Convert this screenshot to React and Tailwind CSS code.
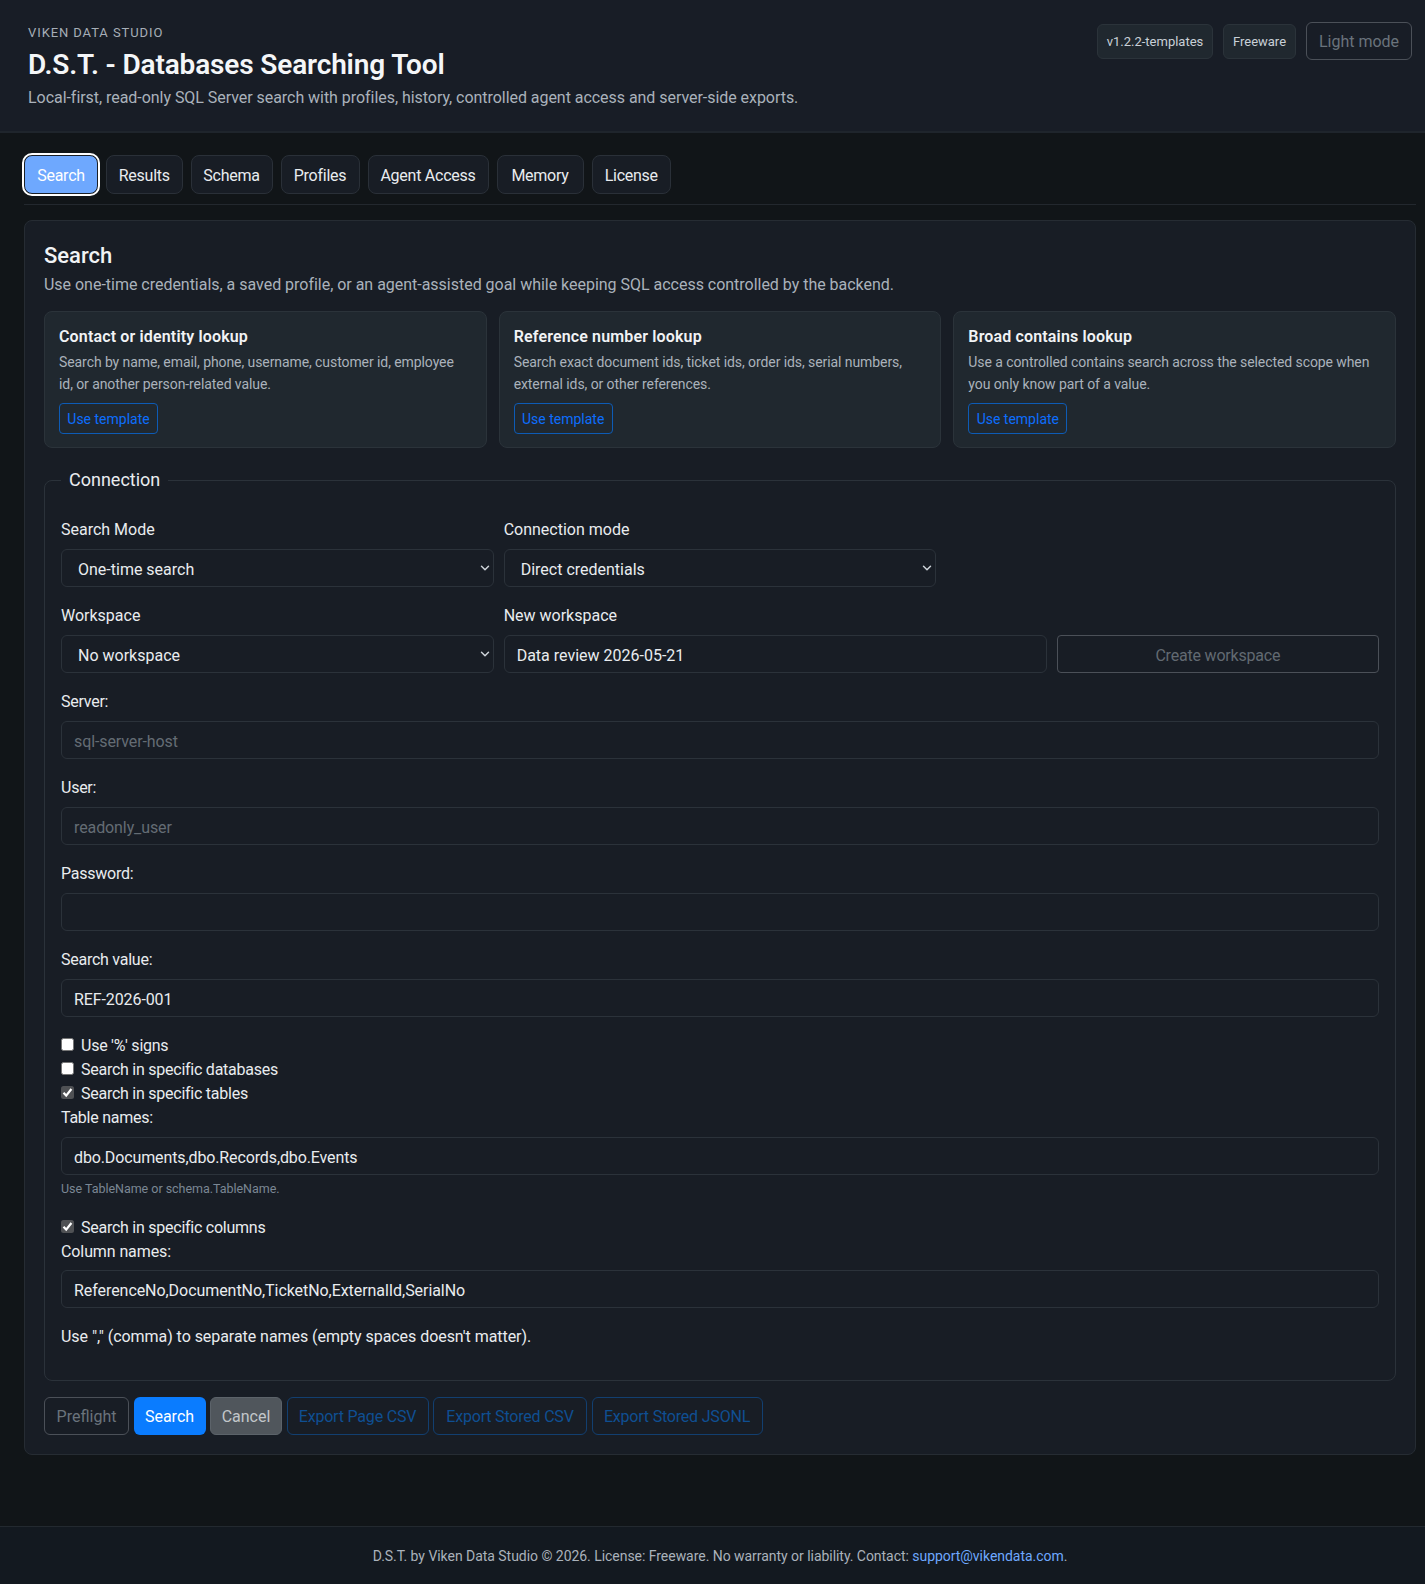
import { ChevronDown } from "lucide-react";

const TABS = [
  { label: "Search", width: "w-[74px]" },
  { label: "Results", width: "w-[76.5px]" },
  { label: "Schema", width: "w-[82px]" },
  { label: "Profiles", width: "w-[79px]" },
  { label: "Agent Access", width: "w-[121px]" },
  { label: "Memory", width: "w-[87px]" },
  { label: "License", width: "w-[79.5px]" },
];

const TEMPLATES = [
  {
    title: "Contact or identity lookup",
    text: "Search by name, email, phone, username, customer id, employee id, or another person-related value.",
  },
  {
    title: "Reference number lookup",
    text: "Search exact document ids, ticket ids, order ids, serial numbers, external ids, or other references.",
  },
  {
    title: "Broad contains lookup",
    text: "Use a controlled contains search across the selected scope when you only know part of a value.",
  },
];

function Select({ value }) {
  return (
    <div className="relative h-[38px]">
      <select
        defaultValue={value}
        className="h-full w-full appearance-none rounded-[6px] border border-[#2b323a] bg-[#181d25] pl-4 pr-8 pt-[4px] text-base text-[#e9ecef]"
      >
        <option>{value}</option>
      </select>
      <ChevronDown size={14} strokeWidth={2.5} className="absolute right-[2px] top-[12px] text-[#ced4da]" />
    </div>
  );
}

function Field({ label, value, placeholder }) {
  return (
    <div className="mb-4">
      <label className="mb-2 block h-6 leading-[26px] tracking-[-0.25px] text-[#e9ecef]">{label}</label>
      <input
        type="text"
        defaultValue={value}
        placeholder={placeholder}
        className="h-[38px] w-full rounded-[6px] border border-[#2b323a] bg-[#181d25] px-3 pt-[2px] text-base tracking-[-0.1px] text-[#e9ecef] placeholder-[#646c74] outline-none"
      />
    </div>
  );
}

function Check({ label, checked }) {
  return (
    <div className="flex h-6 items-center text-[#e9ecef]">
      <span
        className={
          checked
            ? "mb-[2px] mr-[7px] flex h-[13px] w-[13px] items-center justify-center rounded-[2.5px] bg-[#4f5154]"
            : "mb-[2px] mr-[7px] h-[13px] w-[13px] rounded-[2.5px] border border-[#767676] bg-white"
        }
      >
        {checked && (
          <svg viewBox="0 0 13 13" className="h-[13px] w-[13px]" fill="none" stroke="#fff" strokeWidth="2.2">
            <path d="M2.5 6.8 5.2 9.6 10.4 3" />
          </svg>
        )}
      </span>
      <span className="pt-[2px] leading-6 tracking-[-0.25px]">{label}</span>
    </div>
  );
}

export default function App() {
  return (
    <div className="overflow-hidden">
      <div className="flex min-h-[1584px] w-[1440px] flex-col bg-[#111518] font-['Roboto',sans-serif] text-base text-[#e9ecef]">
        {/* Header */}
        <header className="flex h-[133px] items-start justify-between border-b-2 border-[#1f252c] bg-[#181d26] px-7 pt-[22px]">
          <div>
            <p className="pt-[1px] text-[13px] uppercase leading-[20px] tracking-[0.07em] text-[#a6aeb7]">Viken Data Studio</p>
            <h1 className="mt-[2px] text-[28px] font-semibold leading-[40px] tracking-[-0.15px] text-[#f4f6f8]">D.S.T. - Databases Searching Tool</h1>
            <p className="mt-[1px] leading-6 tracking-[-0.045px] text-[#aab2bb]">
              Local-first, read-only SQL Server search with profiles, history, controlled agent access and server-side exports.
            </p>
          </div>
          <div className="flex items-center gap-[10px]">
            <span className="flex h-[35px] w-[116px] items-center justify-center rounded-[6px] border border-[#2b333a] bg-[#20282f] pt-[2px] text-[13px] text-[#c9d0d7]">v1.2.2-templates</span>
            <span className="flex h-[35px] w-[73px] items-center justify-center rounded-[6px] border border-[#2b333a] bg-[#20282f] pt-[2px] text-[13px] text-[#c9d0d7]">Freeware</span>
            <button className="h-[38px] w-[106px] rounded-[6px] border border-[#4b5058] pt-[2px] text-[#6a737c]">Light mode</button>
          </div>
        </header>

        {/* Tabs */}
        <main className="px-6 pt-[22px]">
          <nav className="flex h-[50px] gap-2 border-b border-[#23282e]">
            {TABS.map((tab, i) => (
              <button
                key={tab.label}
                className={
                  i === 0
                    ? `${tab.width} h-[39px] rounded-[8px] border border-[#1a1f26] bg-[#6ea8fe] pt-[2px] tracking-[-0.25px] text-white outline-2 outline-offset-[-0.5px] outline-white`
                    : `${tab.width} h-[39px] rounded-[8px] border border-[#2a3038] bg-[#181d25] pt-[2px] tracking-[-0.25px] text-[#e9ecef]`
                }
              >
                {tab.label}
              </button>
            ))}
          </nav>

          {/* Search panel */}
          <section className="mt-[15px] rounded-[8px] border border-[#262c33] bg-[#181d25] px-[19px] pb-[19px] pt-5">
            <h2 className="text-[22px] font-medium leading-[30px] text-[#f1f3f5]">Search</h2>
            <p className="mt-[2px] leading-6 tracking-[-0.02px] text-[#aab2bb]">
              Use one-time credentials, a saved profile, or an agent-assisted goal while keeping SQL access controlled by the backend.
            </p>

            <div className="mt-[14px] grid grid-cols-3 gap-3">
              {TEMPLATES.map((t) => (
                <div key={t.title} className="h-[137px] rounded-[8px] border border-[#2b333a] bg-[#20282f] px-[14px] pt-[13px]">
                  <h3 className="font-semibold leading-6 tracking-[0.15px] text-[#f1f3f5]">{t.title}</h3>
                  <p className="mt-[2px] pr-2 text-sm leading-[22px] tracking-[-0.08px] text-[#aab2bb]">{t.text}</p>
                  <button className="mt-2 h-[31px] w-[99px] rounded-[4px] border border-[#0d5bb5] text-sm text-[#0d6efd]">Use template</button>
                </div>
              ))}
            </div>

            {/* Connection */}
            <fieldset className="mt-5 rounded-[8px] border border-[#2b323a] px-4 pb-[30px]">
              <legend className="px-2 text-[18px] leading-6">Connection</legend>

              <div className="mt-[25px] grid grid-cols-3 gap-x-[10px]">
                <div className="mb-4">
                  <label className="mb-2 block h-6 leading-[26px]">Search Mode</label>
                  <Select value="One-time search" />
                </div>
                <div className="mb-4">
                  <label className="mb-2 block h-6 leading-[26px]">Connection mode</label>
                  <Select value="Direct credentials" />
                </div>
              </div>

              <div className="grid grid-cols-3 gap-x-[10px]">
                <div className="mb-4">
                  <label className="mb-2 block h-6 leading-[26px]">Workspace</label>
                  <Select value="No workspace" />
                </div>
                <div className="col-span-2 mb-4">
                  <label className="mb-2 block h-6 leading-[26px]">New workspace</label>
                  <div className="flex gap-[10px]">
                    <input
                      type="text"
                      defaultValue="Data review 2026-05-21"
                      className="h-[38px] w-[543px] rounded-[6px] border border-[#2b323a] bg-[#181d25] px-3 pt-[2px] text-base text-[#e9ecef] outline-none"
                    />
                    <button className="h-[38px] flex-1 rounded-[4px] border border-[#4b5058] pt-[4px] tracking-[-0.2px] text-[#626a72]">Create workspace</button>
                  </div>
                </div>
              </div>

              <Field label="Server:" placeholder="sql-server-host" />
              <Field label="User:" placeholder="readonly_user" />
              <Field label="Password:" />
              <Field label="Search value:" value="REF-2026-001" />

              <Check label="Use '%' signs" />
              <Check label="Search in specific databases" />
              <Check label="Search in specific tables" checked />

              <div>
                <label className="mb-2 block h-6 leading-[26px] tracking-[-0.25px]">Table names:</label>
                <input
                  type="text"
                  defaultValue="dbo.Documents,dbo.Records,dbo.Events"
                  className="h-[38px] w-full rounded-[6px] border border-[#2b323a] bg-[#181d25] px-3 pt-[2px] text-base tracking-[-0.12px] text-[#e9ecef] outline-none"
                />
                <p className="mb-[17px] mt-[5px] text-[12.5px] leading-[18px] tracking-[-0.03px] text-[#7b8794]">Use TableName or schema.TableName.</p>
              </div>

              <Check label="Search in specific columns" checked />
              <div>
                <label className="mb-[7px] block h-6 leading-[26px] tracking-[-0.1px]">Column names:</label>
                <input
                  type="text"
                  defaultValue="ReferenceNo,DocumentNo,TicketNo,ExternalId,SerialNo"
                  className="h-[38px] w-full rounded-[6px] border border-[#2b323a] bg-[#181d25] px-3 pt-[2px] text-base tracking-[-0.06px] text-[#e9ecef] outline-none"
                />
              </div>
              <p className="mt-4 leading-[26px] tracking-[-0.05px]">Use "," (comma) to separate names (empty spaces doesn't matter).</p>
            </fieldset>

            {/* Actions */}
            <div className="mt-4 flex gap-[4.5px]">
              <button className="h-[38px] w-[85px] rounded-[6px] border border-[#4b5058] pt-[2px] text-[#6a737c]">Preflight</button>
              <button className="h-[38px] w-[72px] rounded-[6px] bg-[#0a7cff] pt-[2px] text-white">Search</button>
              <button className="h-[38px] w-[72px] rounded-[6px] border border-[#5c636a] bg-[#50565c] pt-[2px] text-[#c2c6ca]">Cancel</button>
              <button className="h-[38px] w-[142px] rounded-[6px] border border-[#123f70] pt-[2px] tracking-[-0.2px] text-[#0f4f92]">Export Page CSV</button>
              <button className="h-[38px] w-[154px] rounded-[6px] border border-[#123f70] pt-[2px] tracking-[-0.2px] text-[#0f4f92]">Export Stored CSV</button>
              <button className="h-[38px] w-[171px] rounded-[6px] border border-[#123f70] pt-[2px] tracking-[-0.2px] text-[#0f4f92]">Export Stored JSONL</button>
            </div>
          </section>
        </main>

        {/* Footer */}
        <footer className="mt-auto flex h-[58px] items-center justify-center border-t border-[#23292f] bg-[#131920] text-sm tracking-[-0.04px] text-[#aab2bb]">
          <span>
            D.S.T. by Viken Data Studio © 2026. License: Freeware. No warranty or liability. Contact: <a className="text-[#6ea8fe]">support@vikendata.com</a>.
          </span>
        </footer>
      </div>
    </div>
  );
}
